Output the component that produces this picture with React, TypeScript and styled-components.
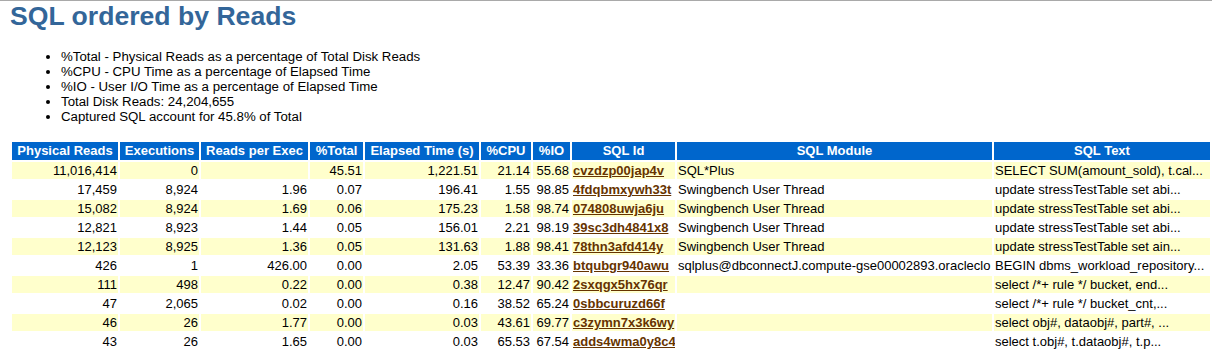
import React from "react";
import styled, { createGlobalStyle } from "styled-components";

const GlobalStyle = createGlobalStyle`
  html, body {
    margin: 0;
    padding: 0;
    background: #ffffff;
  }
  body {
    font-family: "Liberation Sans", Arial, Helvetica, sans-serif;
    color: #000000;
  }
`;

const Page = styled.div`
  border-top: 1px solid #a9a9a9;
  padding-left: 10px;
`;

const Heading = styled.h3`
  margin: 0;
  font-weight: bold;
  font-size: 26.6px;
  line-height: 30px;
  color: #336699;
`;

const Notes = styled.ul`
  margin: 18px 0 0 0;
  padding-left: 51px;
  list-style: disc;
`;

const Note = styled.li`
  font-size: 13.25px;
  line-height: 15px;
`;

const Table = styled.table`
  margin-top: 16px;
  width: 1202px;
  table-layout: fixed;
  border-collapse: separate;
  border-spacing: 2px;
`;

const HeadCell = styled.th<{ $width: number }>`
  box-sizing: border-box;
  width: ${(p) => p.$width}px;
  padding: 1px 4px 2px 4px;
  background: #0066cc;
  color: #ffffff;
  font-weight: bold;
  font-size: 13px;
  line-height: 15px;
  text-align: center;
  white-space: nowrap;
  overflow: hidden;
`;

const Cell = styled.td<{ $shade: boolean; $align: "left" | "right" }>`
  box-sizing: border-box;
  padding: 1px;
  background: ${(p) => (p.$shade ? "#ffffcc" : "#ffffff")};
  color: #000000;
  font-size: 13px;
  line-height: 15px;
  text-align: ${(p) => p.$align};
  vertical-align: top;
  white-space: nowrap;
  overflow: hidden;
`;

const SqlLink = styled.a`
  font-weight: bold;
  color: #663300;
  text-decoration: underline;
  cursor: pointer;
`;

interface Column {
  title: string;
  width: number;
}

const columns: Column[] = [
  { title: "Physical Reads", width: 106 },
  { title: "Executions", width: 79 },
  { title: "Reads per Exec", width: 107 },
  { title: "%Total", width: 53 },
  { title: "Elapsed Time (s)", width: 114 },
  { title: "%CPU", width: 50 },
  { title: "%IO", width: 37 },
  { title: "SQL Id", width: 103 },
  { title: "SQL Module", width: 315 },
  { title: "SQL Text", width: 216 },
];

interface SqlRow {
  reads: string;
  execs: string;
  perExec: string;
  total: string;
  elapsed: string;
  cpu: string;
  io: string;
  sqlId: string;
  module: string;
  text: string;
}

const rows: SqlRow[] = [
  { reads: "11,016,414", execs: "0", perExec: "", total: "45.51", elapsed: "1,221.51", cpu: "21.14", io: "55.68", sqlId: "cvzdzp00jap4v", module: "SQL*Plus", text: "SELECT SUM(amount_sold), t.cal..." },
  { reads: "17,459", execs: "8,924", perExec: "1.96", total: "0.07", elapsed: "196.41", cpu: "1.55", io: "98.85", sqlId: "4fdqbmxywh33t", module: "Swingbench User Thread", text: "update stressTestTable set abi..." },
  { reads: "15,082", execs: "8,924", perExec: "1.69", total: "0.06", elapsed: "175.23", cpu: "1.58", io: "98.74", sqlId: "074808uwja6ju", module: "Swingbench User Thread", text: "update stressTestTable set abi..." },
  { reads: "12,821", execs: "8,923", perExec: "1.44", total: "0.05", elapsed: "156.01", cpu: "2.21", io: "98.19", sqlId: "39sc3dh4841x8", module: "Swingbench User Thread", text: "update stressTestTable set abi..." },
  { reads: "12,123", execs: "8,925", perExec: "1.36", total: "0.05", elapsed: "131.63", cpu: "1.88", io: "98.41", sqlId: "78thn3afd414y", module: "Swingbench User Thread", text: "update stressTestTable set ain..." },
  { reads: "426", execs: "1", perExec: "426.00", total: "0.00", elapsed: "2.05", cpu: "53.39", io: "33.36", sqlId: "btqubgr940awu", module: "sqlplus@dbconnectJ.compute-gse00002893.oracleclo", text: "BEGIN dbms_workload_repository..." },
  { reads: "111", execs: "498", perExec: "0.22", total: "0.00", elapsed: "0.38", cpu: "12.47", io: "90.42", sqlId: "2sxqgx5hx76qr", module: "", text: "select /*+ rule */ bucket, end..." },
  { reads: "47", execs: "2,065", perExec: "0.02", total: "0.00", elapsed: "0.16", cpu: "38.52", io: "65.24", sqlId: "0sbbcuruzd66f", module: "", text: "select /*+ rule */ bucket_cnt,..." },
  { reads: "46", execs: "26", perExec: "1.77", total: "0.00", elapsed: "0.03", cpu: "43.61", io: "69.77", sqlId: "c3zymn7x3k6wy", module: "", text: "select obj#, dataobj#, part#, ..." },
  { reads: "43", execs: "26", perExec: "1.65", total: "0.00", elapsed: "0.03", cpu: "65.53", io: "67.54", sqlId: "adds4wma0y8c4", module: "", text: "select t.obj#, t.dataobj#, t.p..." },
];

const notes = [
  "%Total - Physical Reads as a percentage of Total Disk Reads",
  "%CPU - CPU Time as a percentage of Elapsed Time",
  "%IO - User I/O Time as a percentage of Elapsed Time",
  "Total Disk Reads: 24,204,655",
  "Captured SQL account for 45.8% of Total",
];

const App = () => {
  return (
    <>
      <GlobalStyle />
      <Page>
        <Heading>SQL ordered by Reads</Heading>
        <Notes>
          {notes.map((n) => (
            <Note key={n}>{n}</Note>
          ))}
        </Notes>
        <Table>
          <thead>
            <tr>
              {columns.map((c) => (
                <HeadCell key={c.title} $width={c.width}>
                  {c.title}
                </HeadCell>
              ))}
            </tr>
          </thead>
          <tbody>
            {rows.map((r, i) => {
              const shade = i % 2 === 0;
              return (
                <tr key={r.sqlId}>
                  <Cell $shade={shade} $align="right">{r.reads}</Cell>
                  <Cell $shade={shade} $align="right">{r.execs}</Cell>
                  <Cell $shade={shade} $align="right">{r.perExec}</Cell>
                  <Cell $shade={shade} $align="right">{r.total}</Cell>
                  <Cell $shade={shade} $align="right">{r.elapsed}</Cell>
                  <Cell $shade={shade} $align="right">{r.cpu}</Cell>
                  <Cell $shade={shade} $align="right">{r.io}</Cell>
                  <Cell $shade={shade} $align="left">
                    <SqlLink href={"#" + r.sqlId}>{r.sqlId}</SqlLink>
                  </Cell>
                  <Cell $shade={shade} $align="left">{r.module}</Cell>
                  <Cell $shade={shade} $align="left">{r.text}</Cell>
                </tr>
              );
            })}
          </tbody>
        </Table>
      </Page>
    </>
  );
};

export default App;
